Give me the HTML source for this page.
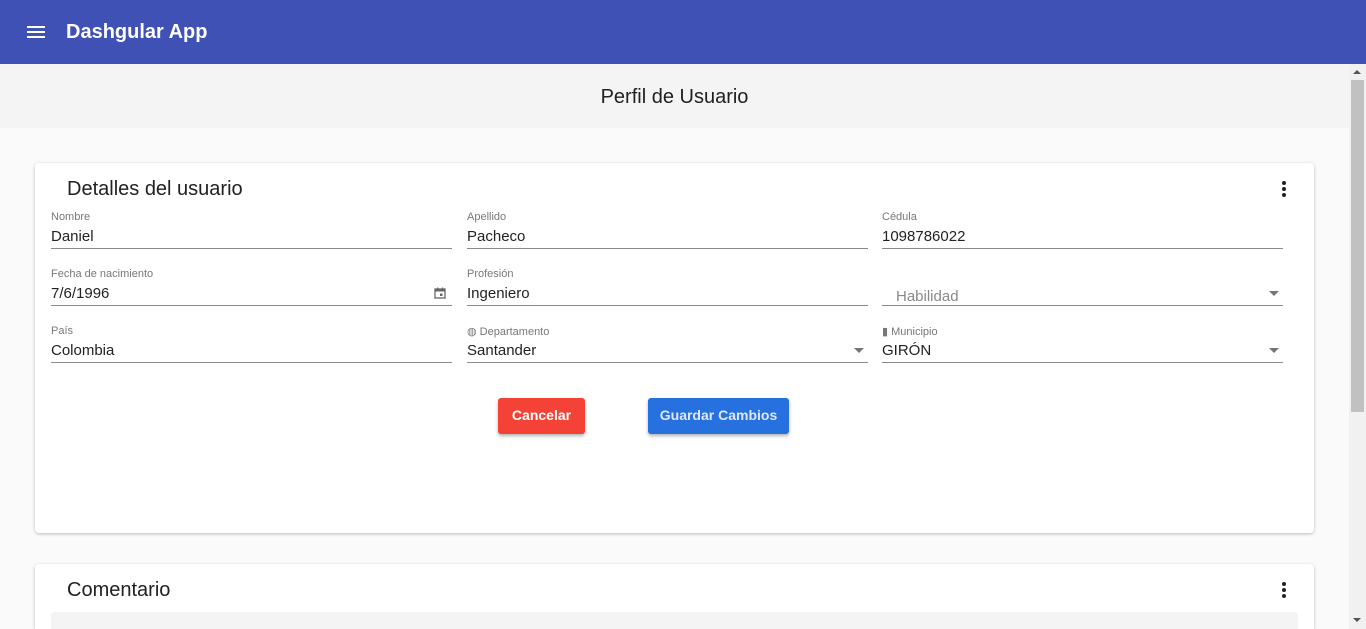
<!DOCTYPE html>
<html style="overflow:hidden;height:629px"><head><meta charset="utf-8"><style>
*{margin:0;padding:0;box-sizing:border-box}
body{width:1366px;height:629px;overflow:hidden;background:#fafafa;font-family:"Liberation Sans",Arial,sans-serif;position:relative;color:#212121}
.bar{position:absolute;left:0;top:0;width:1366px;height:64px;background:#3f51b5;color:#fff}
.bar .t{position:absolute;left:66px;top:21px;font-size:20px;font-weight:bold}
.ham{position:absolute;left:27px;width:18px;height:2px;background:#fff}
.band{position:absolute;left:0;top:64px;width:1349px;height:64px;background:#f4f4f4;text-align:center;font-size:20px;line-height:66px;color:#212121}
.card{position:absolute;left:35px;width:1279px;background:#fff;border-radius:4px;box-shadow:0 1px 3px rgba(0,0,0,.25);overflow:hidden}
.ct{position:absolute;left:32px;font-size:20px;color:#212121}
.dots{position:absolute;left:1247px;width:4px}
.dots i{display:block;width:4px;height:4px;border-radius:2px;background:#222;margin-bottom:2px}
.f{position:absolute;width:401px;height:38px;border-bottom:1px solid #8a8a8a}
.f .l{position:absolute;left:0;top:0;font-size:11px;color:#777}
.f .v{position:absolute;left:0;top:17px;font-size:15px;color:#222}
.f .p{position:absolute;left:14px;top:20px;font-size:15px;color:#888}
.arr{position:absolute;right:4px;top:23px;width:0;height:0;border-left:5px solid transparent;border-right:5px solid transparent;border-top:5px solid #757575}
.btn{position:absolute;top:398px;height:36px;border-radius:3px;color:#fff;font-weight:bold;font-size:14px;text-align:center;line-height:34px;box-shadow:0 2px 3px rgba(0,0,0,.3)}
.sb{position:absolute;left:1349px;top:64px;width:17px;height:565px;background:#f1f1f1}
.thumb{position:absolute;left:1351px;top:80px;width:13px;height:332px;background:#c1c1c1}
</style></head><body>
<div class="bar"><div class="ham" style="top:26px"></div><div class="ham" style="top:31px"></div><div class="ham" style="top:36px"></div><div class="t">Dashgular App</div></div>
<div class="band">Perfil de Usuario</div>
<div class="card" style="top:163px;height:370px">
<div class="ct" style="top:15px">Detalles del usuario</div>
<div class="dots" style="top:18px"><i></i><i></i><i></i></div>
</div>
<div class="f" style="left:51px;top:211px"><span class="l">Nombre</span><span class="v">Daniel</span></div>
<div class="f" style="left:467px;top:211px"><span class="l">Apellido</span><span class="v">Pacheco</span></div>
<div class="f" style="left:882px;top:211px"><span class="l">Cédula</span><span class="v">1098786022</span></div>
<div class="f" style="left:51px;top:268px"><span class="l">Fecha de nacimiento</span><span class="v">7/6/1996</span>
<svg style="position:absolute;left:383px;top:19px" width="12" height="12" viewBox="0 0 12 12"><rect x="1" y="2" width="10" height="9" fill="none" stroke="#666" stroke-width="1.3"/><rect x="1" y="2" width="10" height="2.5" fill="#666"/><rect x="6" y="6.5" width="2.5" height="2.5" fill="#666"/><rect x="3" y="0.5" width="1.2" height="2" fill="#666"/><rect x="8" y="0.5" width="1.2" height="2" fill="#666"/></svg></div>
<div class="f" style="left:467px;top:268px"><span class="l">Profesión</span><span class="v">Ingeniero</span></div>
<div class="f" style="left:882px;top:268px"><span class="p">Habilidad</span><span class="arr"></span></div>
<div class="f" style="left:51px;top:325px"><span class="l">País</span><span class="v">Colombia</span></div>
<div class="f" style="left:467px;top:325px"><span class="l">&#9677; Departamento</span><span class="v">Santander</span><span class="arr"></span></div>
<div class="f" style="left:882px;top:325px"><span class="l">&#9646; Municipio</span><span class="v">GIRÓN</span><span class="arr"></span></div>
<div class="btn" style="left:498px;width:87px;background:#f44336">Cancelar</div>
<div class="btn" style="left:648px;width:141px;background:#2670e0;color:#dfe8f8">Guardar Cambios</div>
<div class="card" style="top:564px;height:65px;border-radius:4px 4px 0 0">
<div class="ct" style="top:15px">Comentario</div>
<div class="dots" style="top:18px"><i></i><i></i><i></i></div>
<div style="position:absolute;left:16px;top:48px;width:1247px;height:40px;background:#f4f4f4;border-radius:4px"></div>
</div>
<div class="sb"></div><div class="thumb"></div>
<div style="position:absolute;left:1353px;top:618px;border-left:4px solid transparent;border-right:4px solid transparent;border-top:4px solid #555"></div>
<div style="position:absolute;left:1353px;top:70px;border-left:4px solid transparent;border-right:4px solid transparent;border-bottom:4px solid #555"></div>
</body></html>
